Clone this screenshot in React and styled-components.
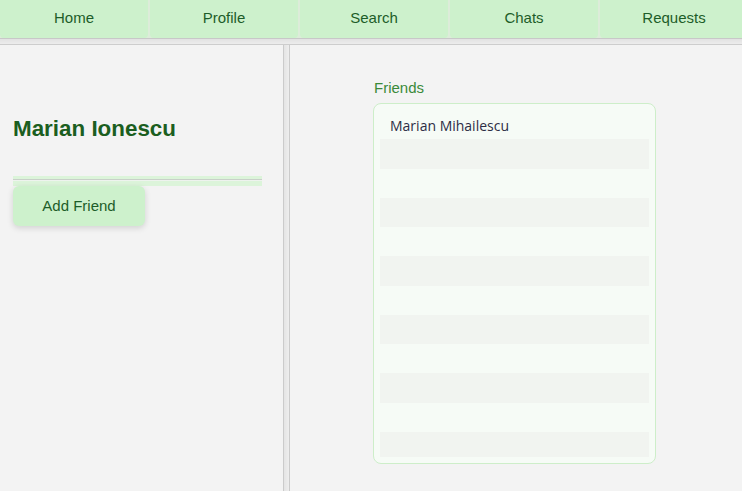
import React from 'react';
import styled, { createGlobalStyle } from 'styled-components';

const GlobalStyle = createGlobalStyle`
  html, body {
    margin: 0;
    padding: 0;
    background: #f3f3f3;
    font-family: "Liberation Sans", Arial, sans-serif;
  }
  * {
    box-sizing: border-box;
  }
`;

const Page = styled.div`
  display: flex;
  flex-direction: column;
  height: 100vh;
  overflow: hidden;
`;

const Nav = styled.nav`
  display: flex;
  gap: 2px;
  height: 38px;
  overflow: hidden;
  background: #dcecd9;
`;

const NavItem = styled.a`
  flex: 0 0 148px;
  display: flex;
  align-items: center;
  justify-content: center;
  padding-bottom: 3px;
  background: #cdf1cc;
  border-radius: 0 0 4px 4px;
  color: #1d5d29;
  font-size: 15px;
  text-decoration: none;
  cursor: pointer;
`;

const HDivider = styled.div`
  height: 7px;
  border-top: 1px solid #c8c8c8;
  border-bottom: 1px solid #cdcdcd;
  background: linear-gradient(to bottom, #e2e2e2, #ececec);
`;

const Main = styled.div`
  flex: 1;
  display: flex;
  min-height: 0;
`;

const Sidebar = styled.aside`
  width: 283px;
  padding: 70px 21px 0 13px;
  display: flex;
  flex-direction: column;
`;

const VDivider = styled.div`
  width: 7px;
  border-left: 1px solid #cbcbcb;
  border-right: 1px solid #cbcbcb;
  background: linear-gradient(to right, #e4e4e4, #eeeeee);
`;

const Name = styled.h1`
  margin: 0;
  font-size: 22.4px;
  line-height: 28px;
  font-weight: bold;
  color: #1b5e20;
`;

const Rule = styled.div`
  margin-top: 33px;
  height: 10px;
  background: linear-gradient(
    to bottom,
    #dcf4da 0 3px,
    #c9d0c9 3px 4px,
    #eef3ee 4px 5px,
    #dcf4da 5px 10px
  );
`;

const AddButton = styled.button`
  align-self: flex-start;
  width: 132px;
  height: 40px;
  padding-bottom: 2px;
  border: none;
  border-radius: 6px;
  background: #cdf1cc;
  box-shadow: 0 2px 6px rgba(0, 0, 0, 0.14);
  color: #1d5d29;
  font-family: "Liberation Sans", Arial, sans-serif;
  font-size: 15px;
  cursor: pointer;
`;

const Content = styled.section`
  flex: 1;
  padding: 34px 0 0 83px;
`;

const Label = styled.div`
  font-size: 15px;
  line-height: 18px;
  color: #3a8a3a;
  margin-left: 1px;
  margin-bottom: 6px;
`;

const FriendsCard = styled.div`
  width: 283px;
  height: 361px;
  padding: 6px;
  background: #f6fbf6;
  border: 1px solid #cdeec9;
  border-radius: 8px;
`;

const FriendList = styled.ul`
  list-style: none;
  margin: 0;
  padding: 0;
  height: 100%;
  overflow: hidden;
`;

const FriendRow = styled.li`
  height: 29.25px;
  padding-left: 10px;
  padding-top: 2px;
  display: flex;
  align-items: center;
  background: ${props => (props.shaded ? '#f1f4f0' : 'transparent')};
  font-family: "Open Sans", "Noto Sans", sans-serif;
  font-size: 14px;
  color: #2d2d45;
`;

const navLinks = ['Home', 'Profile', 'Search', 'Chats', 'Requests'];
const friends = ['Marian Mihailescu'];

export default function App() {
  const rows = Array.from({ length: 12 }, (_, i) => friends[i] || '');

  return (
    <>
      <GlobalStyle />
      <Page>
        <Nav>
          {navLinks.map(link => (
            <NavItem key={link}>{link}</NavItem>
          ))}
        </Nav>
        <HDivider />
        <Main>
          <Sidebar>
            <Name>Marian Ionescu</Name>
            <Rule />
            <AddButton>Add Friend</AddButton>
          </Sidebar>
          <VDivider />
          <Content>
            <Label>Friends</Label>
            <FriendsCard>
              <FriendList>
                {rows.map((name, i) => (
                  <FriendRow key={i} shaded={i % 2 === 1}>
                    {name}
                  </FriendRow>
                ))}
              </FriendList>
            </FriendsCard>
          </Content>
        </Main>
      </Page>
    </>
  );
}
